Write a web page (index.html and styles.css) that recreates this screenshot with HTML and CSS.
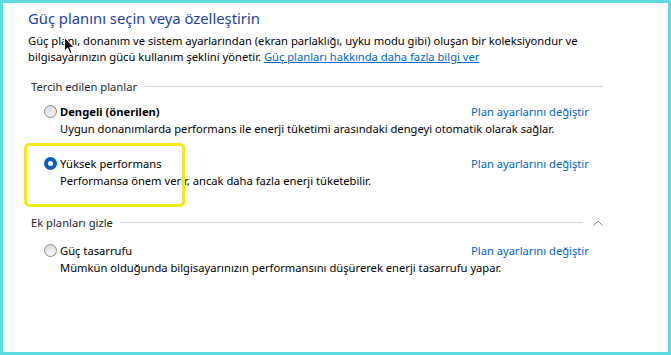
FILE: index.html
```html
<!DOCTYPE html>
<html lang="tr">
<head>
  <meta charset="UTF-8">
  <title>Güç Seçenekleri</title>
  <link rel="stylesheet" href="styles.css">
</head>
<body>
<div class="frame">
  <main class="panel">
    <h1 class="title">Güç planını seçin veya özelleştirin</h1>
    <p class="intro">
      <span class="intro__line">Güç planı, donanım ve sistem ayarlarından (ekran parlaklığı, uyku modu gibi) oluşan bir koleksiyondur ve</span>
      <span class="intro__line">bilgisayarınızın gücü kullanım şeklini yönetir. <a href="#" class="intro__link">Güç planları hakkında daha fazla bilgi ver</a></span>
    </p>

    <section class="group">
      <div class="group__head">
        <span class="group__name">Tercih edilen planlar</span>
        <span class="group__rule"></span>
      </div>

      <div class="plan">
        <span class="radio"></span>
        <span class="plan__name plan__name--bold">Dengeli (önerilen)</span>
        <a href="#" class="plan__link">Plan ayarlarını değiştir</a>
        <span class="plan__desc">Uygun donanımlarda performans ile enerji tüketimi arasındaki dengeyi otomatik olarak sağlar.</span>
      </div>

      <div class="plan plan--marked">
        <span class="radio radio--checked"></span>
        <span class="plan__name">Yüksek performans</span>
        <a href="#" class="plan__link">Plan ayarlarını değiştir</a>
        <span class="plan__desc">Performansa önem verir, ancak daha fazla enerji tüketebilir.</span>
      </div>
    </section>

    <section class="group group--extra">
      <div class="group__head">
        <span class="group__name">Ek planları gizle</span>
        <span class="group__rule"></span>
        <svg class="chevron" width="10" height="6" viewBox="0 0 10 6">
          <path d="M0.5 5.5 L5 1 L9.5 5.5" fill="none" stroke="#8a8a8a" stroke-width="1"/>
        </svg>
      </div>

      <div class="plan">
        <span class="radio"></span>
        <span class="plan__name">Güç tasarrufu</span>
        <a href="#" class="plan__link">Plan ayarlarını değiştir</a>
        <span class="plan__desc">Mümkün olduğunda bilgisayarınızın performansını düşürerek enerji tasarrufu yapar.</span>
      </div>
    </section>
  </main>

  <svg class="pointer" width="12" height="18" viewBox="0 0 12 18">
    <path d="M0.5 0.5 L0.5 14 L3.6 11 L6 16.5 L8 15.6 L5.7 10.3 L10 10.3 Z" fill="#000" stroke="#fff" stroke-width="1"/>
  </svg>
</div>
</body>
</html>
```

FILE: styles.css
```css
body {
  margin: 0;
  font-family: "Segoe UI", "Noto Sans", sans-serif;
  font-size: 11.2px;
  color: #000;
  background: #fff;
}

.frame {
  position: relative;
  box-sizing: border-box;
  height: 100vh;
  border: 3px solid #5ddbe0;
}

.panel {
  width: 575px;
  padding: 5px 0 0 25px;
}

.title {
  margin: 0;
  font-size: 14.8px;
  font-weight: normal;
  line-height: 20px;
  color: #1f3fa3;
}

.intro {
  margin: 5px 0 0;
  line-height: 16px;
}

.intro__line {
  display: block;
  white-space: nowrap;
}

a {
  color: #0066cc;
}

.intro__link {
  text-decoration: underline;
}

.group {
  margin-top: 14px;
}

.group--extra {
  margin-top: 26px;
}

.group__head {
  display: flex;
  align-items: center;
  padding-left: 3px;
  line-height: 15px;
  color: #1e1e1e;
}

.group__rule {
  flex: 1;
  height: 1px;
  margin-left: 7px;
  background: #d5d5d5;
}

.chevron {
  margin-left: 10px;
  flex: none;
}

.plan {
  position: relative;
  display: grid;
  grid-template-columns: 16px 1fr 132px;
  margin: 9px 0 0 16px;
  line-height: 17px;
}

.plan + .plan {
  margin-top: 18px;
}

.group--extra .plan {
  margin-top: 12px;
}

.plan__name--bold {
  font-weight: bold;
}

.plan__link {
  text-decoration: none;
}

.plan__desc {
  grid-column: 2 / span 2;
}

.radio {
  align-self: center;
  box-sizing: border-box;
  width: 13px;
  height: 13px;
  border: 1px solid #8c8c8c;
  border-radius: 50%;
  background: linear-gradient(#dcdcdc, #f6f6f6);
}

.radio--checked {
  border: 4px solid #0a5fbf;
  background: #fff;
}

/* yellow marker drawn over the screenshot */
.plan--marked::before {
  content: "";
  position: absolute;
  left: -20px;
  top: -12px;
  width: 155px;
  height: 58px;
  border: 3px solid #f4e81a;
  border-radius: 5px;
  pointer-events: none;
}

.pointer {
  position: absolute;
  left: 61px;
  top: 34px;
}
```
